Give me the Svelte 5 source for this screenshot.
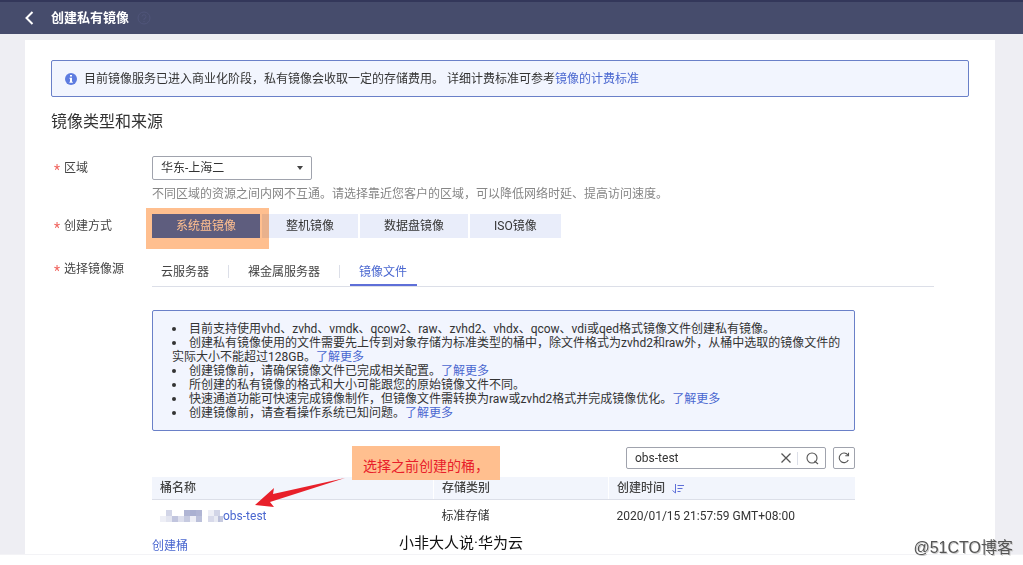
<script>
  let region = $state('华东-上海二');
  let mode = $state('系统盘镜像');
  let source = $state('镜像文件');
  let keyword = $state('obs-test');

  const modes = ['系统盘镜像', '整机镜像', '数据盘镜像', 'ISO镜像'];
  const sources = ['云服务器', '裸金属服务器', '镜像文件'];

  const notes = [
    { text: '目前支持使用vhd、zvhd、vmdk、qcow2、raw、zvhd2、vhdx、qcow、vdi或qed格式镜像文件创建私有镜像。' },
    { text: '创建私有镜像使用的文件需要先上传到对象存储为标准类型的桶中，除文件格式为zvhd2和raw外，从桶中选取的镜像文件的实际大小不能超过128GB。', more: true },
    { text: '创建镜像前，请确保镜像文件已完成相关配置。', more: true },
    { text: '所创建的私有镜像的格式和大小可能跟您的原始镜像文件不同。' },
    { text: '快速通道功能可快速完成镜像制作，但镜像文件需转换为raw或zvhd2格式并完成镜像优化。', more: true },
    { text: '创建镜像前，请查看操作系统已知问题。', more: true }
  ];

  const buckets = [
    { name: 'obs-test', type: '标准存储', created: '2020/01/15 21:57:59 GMT+08:00' }
  ];

  // x, y, opacity of the squares hiding the bucket prefix
  const mosaic = [
    [0, 6, .15], [6, 0, .4], [6, 6, .25], [12, 6, .55], [18, 6, .3], [24, 0, .7],
    [24, 6, .5], [30, 0, .75], [30, 6, .15], [36, 0, .7], [36, 6, .6],
    [48, 0, .15], [48, 6, .35], [54, 0, .4], [54, 6, .2], [58, 6, .5]
  ];
</script>

<header>
  <button class="back" aria-label="返回">
    <svg width="10" height="14" viewBox="0 0 10 14"><path d="M8.500 1 2.500 7l6 6" fill="none" stroke="#fff" stroke-width="2" /></svg>
  </button>
  <h1>创建私有镜像</h1>
  <svg class="help" width="14" height="14" viewBox="0 0 14 14" fill="none" stroke="#50557a">
    <circle cx="7" cy="7" r="6" />
    <path d="M5 5.500a2 2 0 1 1 2 2.200V9M7 10v1" />
  </svg>
</header>

<div class="page">
  <main>
    <div class="alert">
      <svg width="12" height="12" viewBox="0 0 12 12">
        <circle cx="6" cy="6" r="6" fill="#5e7ce0" />
        <path d="M5 2h2v1.500H5zM4.500 4.700H7v4h.8v1H4.400v-1H5V5.700h-.5z" fill="#fff" />
      </svg>
      <p>目前镜像服务已进入商业化阶段，私有镜像会收取一定的存储费用。 详细计费标准可参考<a href="#price">镜像的计费标准</a></p>
    </div>

    <h2>镜像类型和来源</h2>

    <div class="row">
      <label class="name" for="region"><i>*</i>区域</label>
      <div class="field">
        <div class="select">
          <select id="region" bind:value={region}>
            <option>华东-上海二</option>
          </select>
        </div>
        <p class="hint">不同区域的资源之间内网不互通。请选择靠近您客户的区域，可以降低网络时延、提高访问速度。</p>
      </div>
    </div>

    <div class="row modes-row">
      <span class="name" id="mode"><i>*</i>创建方式</span>
      <div class="modes" role="group" aria-labelledby="mode">
        {#each modes as item}
          <button class:active={mode === item} onclick={() => (mode = item)}>{item}</button>
        {/each}
        <div class="marker"></div>
      </div>
    </div>

    <div class="row source-row">
      <span class="name" id="source"><i>*</i>选择镜像源</span>
      <div class="field">
        <div class="tabs" role="tablist" aria-labelledby="source">
          {#each sources as item}
            <button role="tab" aria-selected={source === item} class:active={source === item} onclick={() => (source = item)}>{item}</button>
          {/each}
        </div>

        <div class="panel">
          <ul>
            {#each notes as note}
              <li>{note.text}{#if note.more}<a href="#more">了解更多</a>{/if}</li>
            {/each}
          </ul>

          <div class="tools">
            <div class="search">
              <input type="text" aria-label="搜索桶" bind:value={keyword} />
              <button class="clear" aria-label="清除" onclick={() => (keyword = '')}>
                <svg width="10" height="10" viewBox="0 0 10 10"><path d="M.5.5l9 9M9.500.5l-9 9" stroke="#555" stroke-width="1.300" /></svg>
              </button>
              <button class="find" aria-label="搜索">
                <svg width="13" height="13" viewBox="0 0 13 13" fill="none" stroke="#555" stroke-width="1.100"><circle cx="6" cy="6" r="5" /><path d="M8.500 9l3.500 3" /></svg>
              </button>
            </div>
            <button class="refresh" aria-label="刷新">
              <svg width="12" height="12" viewBox="0 0 12 12" fill="none" stroke="#555" stroke-width="1.100"><path d="M10.300 8A4.800 4.800 0 1 1 9.800 2.900M10.500.8v3H7.300" /></svg>
            </button>
          </div>

          <table>
            <thead>
              <tr>
                <th class="bucket">桶名称</th>
                <th class="type">存储类别</th>
                <th>创建时间
                  <svg class="sort" width="12" height="10" viewBox="0 0 12 10" fill="none" stroke="#5e6fd8"><path d="M3.500 0v9L.5 6.500M5.500 1.500H12M5.500 4.500h5M5.500 7.500h3" /></svg>
                </th>
              </tr>
            </thead>
            <tbody>
              {#each buckets as bucket}
                <tr>
                  <td>
                    <a class="bucket-link" href="#bucket">
                      <svg width="63" height="12" viewBox="0 0 63 12" shape-rendering="crispEdges">
                        {#each mosaic as [x, y, o]}
                          <rect {x} {y} width="6" height="6" fill="#8e96c2" opacity={o} />
                        {/each}
                      </svg>{bucket.name}
                    </a>
                  </td>
                  <td>{bucket.type}</td>
                  <td>{bucket.created}</td>
                </tr>
              {/each}
            </tbody>
          </table>
          <a class="create" href="#create">创建桶</a>

          <div class="callout">选择之前创建的桶，</div>
          <svg class="arrow" width="94" height="34" viewBox="0 0 94 34"><path d="M92 1 20 17l1-6L2 28l19 2-4-5z" fill="#e8202a" /></svg>
          <div class="caption">小非大人说·华为云</div>
        </div>
      </div>
    </div>
  </main>
</div>

<div class="watermark">@51CTO博客</div>

<style>
  :global(body) {
    margin: 0;
    background: #fff;
    color: #333;
    font: 12px/18px Roboto, "Noto Sans CJK SC", sans-serif;
  }

  h1, h2, p, ul {
    margin: 0;
    padding: 0;
  }

  button, input, select {
    font: inherit;
    color: inherit;
    padding: 0;
    border: 0;
    background: none;
  }

  button {
    cursor: pointer;
  }

  a {
    color: #4a67d0;
    text-decoration: none;
  }

  svg {
    display: block;
    flex: none;
  }

  header {
    display: flex;
    align-items: center;
    box-sizing: border-box;
    height: 34px;
    padding: 0 24px;
    background: #464c6c;
    border-top: 2px solid #33375a;
  }

  h1 {
    margin: 0 8px 0 17px;
    color: #fff;
    font-size: 13px;
    font-weight: 700;
  }

  .page {
    padding: 6px 28px 0 25px;
    background: #eeeef3;
    border-bottom: 1px solid #f3f3f6;
  }

  main {
    padding: 20px 26px 0;
    background: #fff;
  }

  .alert {
    display: flex;
    align-items: center;
    gap: 7px;
    padding: 9px 13px 8px;
    border: 1px solid #6a80c8;
    border-radius: 2px;
    background: #f2f5fe;
  }

  h2 {
    margin: 13px 0 22px;
    font-size: 16px;
    font-weight: 400;
    line-height: 24px;
  }

  .row {
    display: flex;
  }

  .name {
    flex: none;
    width: 101px;
    line-height: 24px;
    color: #444;
  }

  .name i {
    display: inline-block;
    width: 10px;
    margin-left: 3px;
    color: #f0625c;
    font-style: normal;
    font-size: 14px;
    line-height: 12px;
    vertical-align: -3px;
  }

  .field {
    flex: 1;
    min-width: 0;
  }

  .select {
    position: relative;
    width: 160px;
  }

  .select::after {
    content: "";
    position: absolute;
    top: 10px;
    right: 9px;
    border: 3px solid transparent;
    border-top: 4px solid #444;
    border-bottom: 0;
    pointer-events: none;
  }

  select {
    display: block;
    width: 100%;
    height: 24px;
    padding: 0 8px;
    appearance: none;
    border: 1px solid #a0a3ad;
    border-radius: 2px;
  }

  .hint {
    margin-top: 5px;
    color: #868686;
  }

  .modes-row {
    margin-top: 11px;
  }

  .modes {
    position: relative;
    display: flex;
    gap: 2px;
  }

  .modes button {
    height: 24px;
    padding: 0 24px;
    background: #e9edfa;
  }

  .modes button.active {
    background: #5e7ce0;
    color: #fff;
  }

  .marker {
    position: absolute;
    top: -6px;
    left: -6px;
    width: 123px;
    height: 41px;
    background: #ffbf8f;
    mix-blend-mode: multiply;
    pointer-events: none;
  }

  .source-row {
    margin-top: 19px;
  }

  .tabs {
    display: flex;
    width: 782px;
    max-width: 100%;
    border-bottom: 1px solid #dcdfe8;
  }

  .tabs button {
    position: relative;
    height: 29px;
    padding: 0 10px 0 9px;
    color: #444;
  }

  .tabs button + button {
    margin-left: 20px;
  }

  .tabs button + button::before {
    content: "";
    position: absolute;
    top: 8px;
    left: -11px;
    height: 13px;
    border-left: 1px solid #dcdfe8;
  }

  .tabs button.active {
    color: #4a67d0;
    box-shadow: inset 0 -2px #5e6fd8;
  }

  .panel {
    position: relative;
    width: 703px;
    max-width: 100%;
    margin-top: 23px;
  }

  ul {
    padding: 11px 9px 10px 19px;
    border: 1px solid #6a80c8;
    border-radius: 2px;
    background: #f2f5fe;
    line-height: 14px;
    list-style: none;
  }

  li::before {
    content: "";
    display: inline-block;
    width: 4px;
    height: 4px;
    margin-right: 13px;
    border-radius: 50%;
    background: #333;
    vertical-align: 2px;
  }

  .tools {
    display: flex;
    justify-content: flex-end;
    gap: 7px;
    margin: 16px 0 8px;
  }

  .search {
    display: flex;
    align-items: center;
    box-sizing: border-box;
    width: 200px;
    height: 22px;
    border: 1px solid #a0a3ad;
    border-radius: 2px;
  }

  .search input {
    flex: 1;
    min-width: 0;
    padding-left: 8px;
    outline: 0;
  }

  .clear {
    padding-right: 6px;
  }

  .find {
    padding: 0 6px 0 8px;
    border-left: 1px solid #dcdfe8;
  }

  .refresh {
    display: grid;
    place-items: center;
    width: 22px;
    height: 22px;
    border: 1px solid #a0a3ad;
    border-radius: 2px;
  }

  table {
    width: 100%;
    table-layout: fixed;
    border-collapse: collapse;
  }

  th, td {
    padding: 2px 8px;
    text-align: left;
  }

  th {
    background: #f2f5fc;
    border-bottom: 1px solid #dcdfe8;
    font-weight: 500;
    color: #444;
  }

  th + th {
    border-left: 1px solid #fff;
  }

  td {
    padding: 7px 8px;
  }

  .bucket {
    width: 265px;
  }

  .type {
    width: 158px;
  }

  .sort {
    display: inline-block;
    margin-left: 4px;
    vertical-align: -2px;
  }

  .bucket-link {
    display: flex;
    align-items: center;
  }

  .create {
    display: block;
    width: max-content;
    padding-top: 6px;
    line-height: 16px;
  }

  .callout {
    position: absolute;
    top: 136px;
    left: 200px;
    padding: 8px 11px 2px;
    background: #ffbf8f;
    color: #e8202a;
    font-size: 14px;
    line-height: 24px;
    white-space: nowrap;
  }

  .arrow {
    position: absolute;
    top: 167px;
    left: 101px;
  }

  .caption {
    position: absolute;
    bottom: 0;
    left: 247px;
    color: #111;
    font-size: 15px;
    line-height: 22px;
  }

  .watermark {
    position: fixed;
    right: 10px;
    bottom: 6px;
    color: #555;
    font-family: "Liberation Sans", "Noto Sans CJK SC", sans-serif;
    font-size: 16px;
    line-height: 22px;
    text-shadow: 1px 1px #ccc;
  }
</style>
